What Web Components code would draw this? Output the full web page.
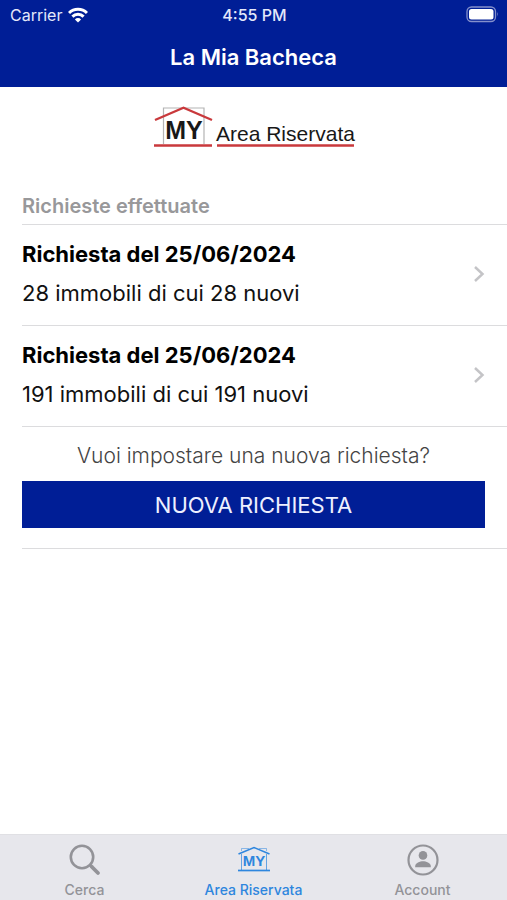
<!DOCTYPE html>
<html lang="it">
<head>
<meta charset="utf-8">
<meta name="viewport" content="width=device-width, initial-scale=1">
<title>La Mia Bacheca</title>
<style>
  html, body {
    margin: 0;
    height: 100%;
  }
  body {
    font-family: Inter, "Liberation Sans", sans-serif;
    font-size: 22px;
    color: #111;
    background: #fff;
    --brand: #001e96;
    --line: #dcdcde;
    --active: #2e86de;
    --muted: #939398;
  }
</style>
</head>
<body>
<bacheca-app></bacheca-app>

<script>
class StatusBar extends HTMLElement {
  constructor() {
    super();
    this.attachShadow({ mode: 'open' });
  }

  connectedCallback() {
    this.shadowRoot.innerHTML = `
      <style>
        :host {
          display: grid;
          grid-template-columns: 1fr auto 1fr;
          align-items: center;
          height: 30px;
          padding: 0 8px 0 10px;
          font-size: 16px;
          color: #e4e8fa;
        }
        .carrier {
          display: flex;
          align-items: center;
          gap: 6px;
        }
        .time { font-weight: 500; }
        .battery { justify-self: end; }
        svg { display: block; }
      </style>
      <div class="carrier">
        <span>${this.getAttribute('carrier')}</span>
        <svg width="20" height="16" viewBox="0 0 20 16" aria-hidden="true">
          <g fill="none" stroke="#fff" stroke-width="3">
            <path d="M1 6a12.7 12.7 0 0 1 18 0"/>
            <path d="M4.4 9.600a7.9 7.9 0 0 1 11.2 0"/>
          </g>
          <path fill="#fff" d="M10 15.4 6.9 12.4a4.4 4.4 0 0 1 6.2 0z"/>
        </svg>
      </div>
      <span class="time">${this.getAttribute('time')}</span>
      <svg class="battery" width="33" height="18" viewBox="0 0 33 18" aria-hidden="true">
        <rect x="1" y="1" width="28.5" height="14.5" rx="4.5" fill="none" stroke="#8490cc" stroke-width="1.3"/>
        <rect x="3" y="3" width="24.5" height="10.5" rx="2.5" fill="#fff"/>
        <path d="M31 6q1.6 2.3 0 4.6z" fill="#8490cc"/>
      </svg>
    `;
  }
}

class NavHeader extends HTMLElement {
  constructor() {
    super();
    this.attachShadow({ mode: 'open' });
    this.shadowRoot.innerHTML = `
      <style>
        :host {
          display: block;
          background: var(--brand);
          color: #fff;
        }
        h1 {
          margin: 0;
          padding: 12px 0 15px;
          font-size: 22px;
          line-height: 30px;
          font-weight: 600;
          text-align: center;
        }
      </style>
      <slot name="status"></slot>
      <h1><slot></slot></h1>
    `;
  }
}

class AreaLogo extends HTMLElement {
  constructor() {
    super();
    this.attachShadow({ mode: 'open' });
    this.shadowRoot.innerHTML = `
      <style>
        :host {
          display: flex;
          justify-content: center;
          padding: 17px 0 44px;
        }
        svg {
          display: block;
          overflow: visible;
        }
        text {
          font-family: "Liberation Sans", Arial, sans-serif;
          fill: #181818;
        }
        .my { font-family: "Liberation Sans Narrow", "Liberation Sans", Arial, sans-serif; }
      </style>
      <svg width="202" height="44" viewBox="0 0 202 44" role="img" aria-label="MY Area Riservata">
        <path d="M10.5 40V4H51v36" fill="none" stroke="#b4b4b4" stroke-width="1.2"/>
        <path d="M2 16 30.5 3.7 59 16" fill="none" stroke="#c9393c" stroke-width="2.4"/>
        <path d="M1 41.5h58M64 41.5h137" stroke="#c9393c" stroke-width="2.4"/>
        <text class="my" x="31" y="35" font-size="25" font-weight="700" text-anchor="middle">MY</text>
        <text x="63" y="37" font-size="21">Area Riservata</text>
      </svg>
    `;
  }
}

class RequestRow extends HTMLElement {
  constructor() {
    super();
    this.attachShadow({ mode: 'open' });
    this.shadowRoot.innerHTML = `
      <style>
        :host {
          display: block;
          border-bottom: 1px solid var(--line);
        }
        a {
          display: flex;
          align-items: center;
          justify-content: space-between;
          padding: 10px 22px 12px 0;
          color: inherit;
          text-decoration: none;
        }
        .text {
          display: flex;
          flex-direction: column;
          line-height: 39px;
        }
        .title {
          font-weight: 700;
          color: #000;
        }
        svg { display: block; }
      </style>
      <a href="#richiesta">
        <span class="text">
          <span class="title"><slot name="title"></slot></span>
          <slot></slot>
        </span>
        <svg width="12" height="18" viewBox="0 0 12 18" aria-hidden="true">
          <path d="M2 2l7.5 7L2 16" fill="none" stroke="#c4c4c7" stroke-width="2.5"/>
        </svg>
      </a>
    `;
  }
}

class RequestList extends HTMLElement {
  constructor() {
    super();
    this.attachShadow({ mode: 'open' });
    this.shadowRoot.innerHTML = `
      <style>
        :host {
          display: block;
          padding-left: 22px;
        }
        h2 {
          margin: 0;
          padding-bottom: 4px;
          border-bottom: 1px solid var(--line);
          font-size: 20px;
          line-height: 28px;
          font-weight: 600;
          color: #98989a;
        }
      </style>
      <h2><slot name="heading"></slot></h2>
      <slot></slot>
    `;
  }
}

class NewRequest extends HTMLElement {
  constructor() {
    super();
    this.attachShadow({ mode: 'open' });
    this.shadowRoot.innerHTML = `
      <style>
        :host {
          display: block;
          padding: 14px 22px 20px 0;
          border-bottom: 1px solid var(--line);
        }
        p {
          margin: 0 0 10px;
          font-size: 21px;
          line-height: 30px;
          font-weight: 300;
          text-align: center;
          color: #444;
        }
        button {
          display: block;
          width: 100%;
          height: 47px;
          padding: 0;
          border: 0;
          background: var(--brand);
          color: #eef0ff;
          font: inherit;
          cursor: pointer;
        }
      </style>
      <p><slot></slot></p>
      <button type="button"><slot name="action"></slot></button>
    `;
  }
}

class TabItem extends HTMLElement {
  constructor() {
    super();
    this.attachShadow({ mode: 'open' });
    this.shadowRoot.innerHTML = `
      <style>
        :host {
          display: block;
          flex: 1;
          color: var(--muted);
        }
        :host([active]) { color: var(--active); }
        a {
          display: flex;
          flex-direction: column;
          align-items: center;
          gap: 4px;
          padding: 8px 0 1px;
          font-size: 14px;
          line-height: 18px;
          font-weight: 500;
          color: inherit;
          text-decoration: none;
        }
      </style>
      <a href="#tab"><slot name="icon"></slot><span><slot></slot></span></a>
    `;
  }
}

class BachecaApp extends HTMLElement {
  constructor() {
    super();
    this.attachShadow({ mode: 'open' });
    this.shadowRoot.innerHTML = `
      <style>
        :host {
          display: flex;
          flex-direction: column;
          min-height: 100%;
        }
        main { flex: 1; }
        nav {
          display: flex;
          background: #e7e7ec;
          border-top: 1px solid #e0e0e4;
        }
        nav svg { display: block; }
        nav text { font-family: "Liberation Sans", Arial, sans-serif; }
      </style>
      <nav-header>
        <status-bar slot="status" carrier="Carrier" time="4:55 PM"></status-bar>
        La Mia Bacheca
      </nav-header>
      <main>
        <area-logo></area-logo>
        <request-list>
          <span slot="heading">Richieste effettuate</span>
          <request-row>
            <span slot="title">Richiesta del 25/06/2024</span>
            28 immobili di cui 28 nuovi
          </request-row>
          <request-row>
            <span slot="title">Richiesta del 25/06/2024</span>
            191 immobili di cui 191 nuovi
          </request-row>
          <new-request>
            Vuoi impostare una nuova richiesta?
            <span slot="action">NUOVA RICHIESTA</span>
          </new-request>
        </request-list>
      </main>
      <nav>
        <tab-item>
          <svg slot="icon" width="34" height="34" viewBox="0 0 34 34" fill="none" stroke="currentColor" aria-hidden="true">
            <circle cx="14" cy="14" r="11.2" stroke-width="2.6"/>
            <path d="M22 22l1.5 1.5" stroke-width="2.6"/>
            <path d="M23.5 23.5 30 30" stroke-width="3.8" stroke-linecap="round"/>
          </svg>
          Cerca
        </tab-item>
        <tab-item active>
          <svg slot="icon" width="34" height="34" viewBox="0 0 34 34" fill="none" stroke="currentColor" aria-hidden="true">
            <path d="M4.5 27V11M29.5 27V11" stroke-width="1" opacity=".7"/>
            <path d="M4.5 8V5.5H12M22 5.5h7.5V8" stroke-width="1" opacity=".5"/>
            <path d="M1.5 11 17 4.5 32.5 11" stroke-width="1.6"/>
            <path d="M1 27.5h32" stroke-width="1.7"/>
            <text x="17" y="23" font-size="15" font-weight="700" text-anchor="middle" fill="currentColor" stroke="none">MY</text>
          </svg>
          Area Riservata
        </tab-item>
        <tab-item>
          <svg slot="icon" width="34" height="34" viewBox="0 0 34 34" aria-hidden="true">
            <circle cx="17" cy="17" r="14.5" fill="none" stroke="currentColor" stroke-width="2.2"/>
            <circle cx="17" cy="12.4" r="4.3" fill="currentColor"/>
            <path d="M9.2 24.3V23c0-3 4.8-4.800 7.800-4.800s7.800 1.800 7.800 4.800v1.300z" fill="currentColor"/>
          </svg>
          Account
        </tab-item>
      </nav>
    `;
  }
}

customElements.define('status-bar', StatusBar);
customElements.define('nav-header', NavHeader);
customElements.define('area-logo', AreaLogo);
customElements.define('request-row', RequestRow);
customElements.define('request-list', RequestList);
customElements.define('new-request', NewRequest);
customElements.define('tab-item', TabItem);
customElements.define('bacheca-app', BachecaApp);
</script>
</body>
</html>
